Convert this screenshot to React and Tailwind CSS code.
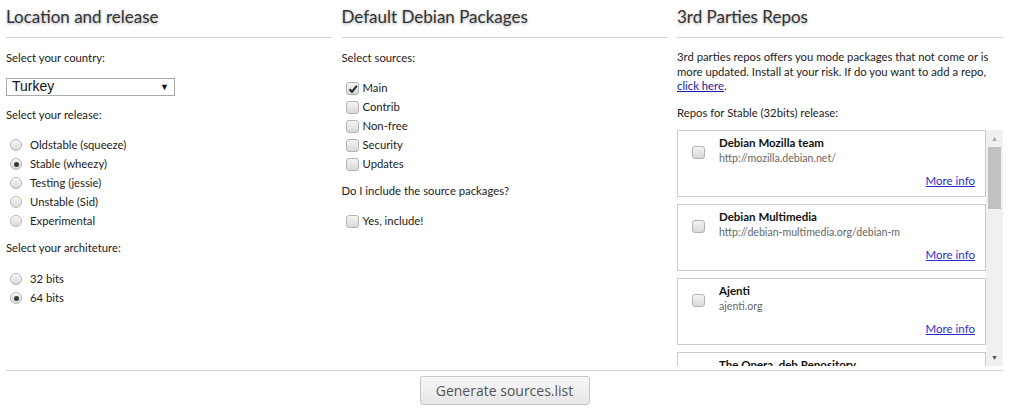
import { useState } from 'react'

const font = { fontFamily: 'Lato, "Open Sans", sans-serif' }

function Radio({ checked, label }) {
    return (
        <label className="flex items-center h-[19px] pl-[4px] text-[11.3px] text-[#222]">
            <span className="w-[12px] h-[12px] rounded-full border border-[#b5b5b5] bg-gradient-to-b from-[#f4f4f4] to-[#dcdcdc] flex items-center justify-center mr-[8px] shadow-[inset_0_1px_1px_rgba(255,255,255,0.9)]">
                {checked && <span className="w-[5px] h-[5px] rounded-full bg-[#3a3a3a]" />}
            </span>
            {label}
        </label>
    )
}

function Check({ checked, label, className = '' }) {
    return (
        <label className={`flex items-center h-[19px] pl-[4px] text-[11.3px] text-[#222] ${className}`}>
            <span className="relative w-[13px] h-[13px] rounded-[3px] border border-[#b3b3b3] bg-gradient-to-b from-[#f5f5f5] to-[#d8d8d8] mr-[4px]">
                {checked && (
                    <svg className="absolute left-[1px] top-[1px]" width="10" height="10" viewBox="0 0 10 10">
                        <path d="M1.5 5.2 L4 7.8 L8.8 1.8" fill="none" stroke="#222" strokeWidth="2" />
                    </svg>
                )}
            </span>
            {label}
        </label>
    )
}

function Heading({ children }) {
    return (
        <div className="border-b border-[#cfcfcf] pt-[6px] pb-[9px]">
            <h2 className="text-[17px] leading-[22px] text-[#333] [text-shadow:0_1px_3px_rgba(0,0,0,0.35)]">
                {children}
            </h2>
        </div>
    )
}

function RepoCard({ title, url }) {
    return (
        <div className="border border-[#cccccc] bg-white h-[67px] flex shrink-0">
            <div className="w-[41px] flex justify-center pt-[15px]">
                <span className="w-[13px] h-[13px] rounded-[3px] border border-[#b3b3b3] bg-gradient-to-b from-[#f5f5f5] to-[#d8d8d8]" />
            </div>
            <div className="flex-1 pt-[4px] pr-[10px] overflow-hidden">
                <div className="text-[11.5px] font-bold text-[#111] leading-[16px]">{title}</div>
                <div className="text-[10.6px] text-[#666] leading-[14px] whitespace-nowrap">{url}</div>
                <div className="text-right mt-[2px]">
                    <a href="#" className="text-[11.5px] text-[#2c2cd4] underline">More info</a>
                </div>
            </div>
        </div>
    )
}

export default function App() {
    const [country] = useState('Turkey')

    return (
        <div className="w-[1009px] h-[414px] bg-white px-[6px]" style={font}>
            <div className="grid grid-cols-3 gap-x-[9.5px] h-[370px]">

                {/* Location and release */}
                <div>
                    <Heading>Location and release</Heading>
                    <p className="text-[11.3px] text-[#222] mt-[12px]">Select your country:</p>
                    <div className="mt-[11px] w-[169px] h-[18px] border border-[#a9a9a9] flex items-center justify-between px-[5px]">
                        <span className="text-[14px] text-[#111]" style={{ fontFamily: '"Liberation Sans", Arial, sans-serif' }}>{country}</span>
                        <span className="text-[9px] text-[#111]">▼</span>
                    </div>
                    <p className="text-[11.3px] text-[#222] mt-[11px]">Select your release:</p>
                    <div className="mt-[12px]">
                        <Radio label="Oldstable (squeeze)" />
                        <Radio checked label="Stable (wheezy)" />
                        <Radio label="Testing (jessie)" />
                        <Radio label="Unstable (Sid)" />
                        <Radio label="Experimental" />
                    </div>
                    <p className="text-[11.3px] text-[#222] mt-[9px]">Select your architeture:</p>
                    <div className="mt-[13px]">
                        <Radio label="32 bits" />
                        <Radio checked label="64 bits" />
                    </div>
                </div>

                {/* Default Debian Packages */}
                <div>
                    <Heading>Default Debian Packages</Heading>
                    <p className="text-[11.3px] text-[#222] mt-[12px]">Select sources:</p>
                    <div className="mt-[12px]">
                        <Check checked label="Main" />
                        <Check label="Contrib" />
                        <Check label="Non-free" />
                        <Check label="Security" />
                        <Check label="Updates" />
                    </div>
                    <p className="text-[11.3px] text-[#222] mt-[9px]">Do I include the source packages?</p>
                    <Check label="Yes, include!" className="mt-[12px]" />
                </div>

                {/* 3rd Parties Repos */}
                <div>
                    <Heading>3rd Parties Repos</Heading>
                    <p className="text-[11.3px] leading-[14.5px] text-[#222] mt-[12px]">
                        3rd parties repos offers you mode packages that not come or is more updated. Install at your risk. If do you want to add a repo,{' '}
                        <a href="#" className="text-[#1a1aa6] underline">click here</a>.
                    </p>
                    <p className="text-[11.3px] text-[#222] mt-[11px]">Repos for Stable (32bits) release:</p>
                    <div className="mt-[9px] h-[236px] flex overflow-hidden">
                        <div className="flex-1 flex flex-col gap-[7px] overflow-hidden">
                            <RepoCard title="Debian Mozilla team" url="http://mozilla.debian.net/" />
                            <RepoCard title="Debian Multimedia" url="http://debian-multimedia.org/debian-m" />
                            <RepoCard title="Ajenti" url="ajenti.org" />
                            <RepoCard title="The Opera .deb Repository" url="deb.opera.com" />
                        </div>
                        <div className="w-[17px] bg-[#f0f0f0] flex flex-col items-center">
                            <span className="text-[7px] text-[#a3a3a3] h-[17px] leading-[17px]">▲</span>
                            <div className="w-[13px] h-[62px] bg-[#c1c1c1]" />
                            <div className="flex-1" />
                            <span className="text-[7px] text-[#505050] h-[17px] leading-[17px]">▼</span>
                        </div>
                    </div>
                </div>
            </div>

            {/* Footer */}
            <div className="border-t border-[#cfcfcf] flex justify-center pt-[5px]">
                <button
                    className="w-[170px] h-[29px] border border-[#c6c6c6] rounded-[3px] bg-gradient-to-b from-[#f7f7f7] to-[#e6e6e6] text-[14px] text-[#555]"
                    style={{ fontFamily: '"Open Sans", sans-serif' }}
                >
                    Generate sources.list
                </button>
            </div>
        </div>
    )
}
